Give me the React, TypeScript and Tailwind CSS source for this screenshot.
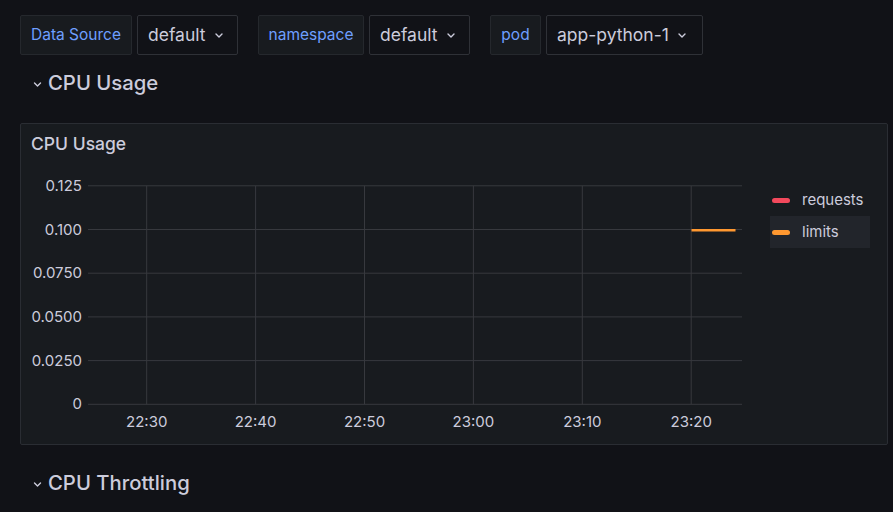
import React from "react";

const Chevron = ({ w = 8, h = 5, className = "" }: { w?: number; h?: number; className?: string }) => (
  <svg width={w} height={h} viewBox="0 0 8 5" className={className} fill="none">
    <polyline points="1,1 4,4 7,1" stroke="#ccccdc" strokeWidth="1.4" strokeLinecap="round" strokeLinejoin="round" />
  </svg>
);

const VarGroup = ({ label, value, lw, vw }: { label: string; value: string; lw: string; vw: string }) => (
  <div className="flex gap-[5px]">
    <div className={`${lw} h-[40px] flex items-center justify-center bg-[#181b1f] border border-[#25282d] rounded-[2px] text-[15.5px] text-[#6e9fff]`}>
      {label}
    </div>
    <div className={`${vw} h-[40px] flex items-center pl-[10px] border border-[#2f3137] rounded-[2px] text-[17.5px] text-[#ccccdc]`}>
      <span>{value}</span>
      <Chevron w={8} h={5} className="ml-[9px] mt-[1px]" />
    </div>
  </div>
);

const RowTitle = ({ title }: { title: string }) => (
  <div className="h-[40px] flex items-center pl-[33px]">
    <Chevron w={9} h={5} className="mt-[2px]" />
    <span className="ml-[6px] text-[20.3px] font-medium text-[#ccccdc]">{title}</span>
  </div>
);

export default function App() {
  const ys = [
    { v: "0.125", y: 185.8 },
    { v: "0.100", y: 229.5 },
    { v: "0.0750", y: 273.2 },
    { v: "0.0500", y: 316.9 },
    { v: "0.0250", y: 360.6 },
    { v: "0", y: 404.3 },
  ];
  const xs = [
    { t: "22:30", x: 146.7 },
    { t: "22:40", x: 255.6 },
    { t: "22:50", x: 364.5 },
    { t: "23:00", x: 473.4 },
    { t: "23:10", x: 582.3 },
    { t: "23:20", x: 691.2 },
  ];
  return (
    <div
      className="w-[893px] h-[512px] bg-[#111217] overflow-hidden"
      style={{ fontFamily: "Inter, 'Noto Sans', sans-serif" }}
    >
      <div className="flex gap-[20px] pt-[15px] pl-[20px]">
        <VarGroup label="Data Source" value="default" lw="w-[112px]" vw="w-[101px]" />
        <VarGroup label="namespace" value="default" lw="w-[106px]" vw="w-[101px]" />
        <VarGroup label="pod" value="app-python-1" lw="w-[51px]" vw="w-[157px]" />
      </div>
      <div className="mt-[8px]">
        <RowTitle title="CPU Usage" />
      </div>
      <div className="ml-[20px] mt-[20px] w-[868px] h-[322px] bg-[#181b1f] border border-[#2a2d33] rounded-[2px] flex flex-col">
        <div className="h-[40px] flex items-center pl-[10px] text-[17.5px] font-medium text-[#ccccdc]">CPU Usage</div>
        <div className="flex">
          <svg width={745} height={280} viewBox="21 164 745 280" className="shrink-0">
            {ys.map((g) => (
              <line key={g.v} x1={88} x2={742} y1={g.y} y2={g.y} stroke="#37393e" strokeWidth={1} />
            ))}
            {xs.map((g) => (
              <line key={g.t} x1={g.x} x2={g.x} y1={185.8} y2={404.3} stroke="#37393e" strokeWidth={1} />
            ))}
            {ys.map((g) => (
              <text key={g.v} x={82} y={g.y + 5} textAnchor="end" fontSize={15} fill="#ccccdc" fontFamily="Inter, sans-serif">
                {g.v}
              </text>
            ))}
            {xs.map((g) => (
              <text key={g.t} x={g.x} y={426.5} textAnchor="middle" fontSize={15} fill="#ccccdc" fontFamily="Inter, sans-serif">
                {g.t}
              </text>
            ))}
            <line x1={691.5} x2={735.5} y1={230.2} y2={230.2} stroke="#ff9830" strokeWidth={2.6} />
          </svg>
          <div className="ml-[4px] mt-[20px] flex flex-col">
            <div className="w-[100px] h-[32px] flex items-center">
              <div className="ml-[2px] w-[18px] h-[5px] rounded-full bg-[#f2495c]" />
              <span className="ml-[12px] text-[15px] text-[#ccccdc]">requests</span>
            </div>
            <div className="w-[100px] h-[32px] flex items-center bg-[#22252b]">
              <div className="ml-[2px] w-[18px] h-[5px] rounded-full bg-[#ff9830]" />
              <span className="ml-[12px] text-[15px] text-[#ccccdc]">limits</span>
            </div>
          </div>
        </div>
      </div>
      <div className="mt-[18px]">
        <RowTitle title="CPU Throttling" />
      </div>
    </div>
  );
}
